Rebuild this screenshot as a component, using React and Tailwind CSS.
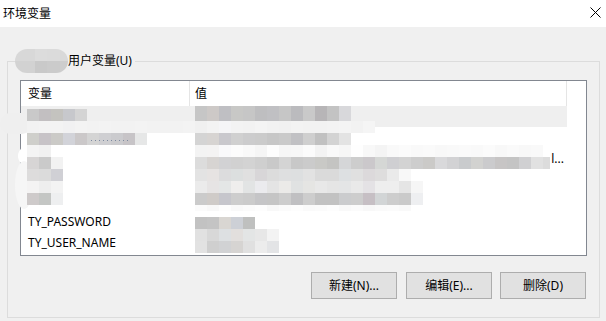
import React from 'react';

// pixelated redaction blocks, page coordinates, 12px cells
const BLOCKS = [
  { x: 27, y: 109, c: ['#c9c9c9', '#c2bfc1', '#c4c3bf', '#c7c8cc', '#d4d4d4'] },
  { x: 27, y: 121, c: ['#f2f2f2', '#f3f3f3', '#f3f3f3', '#f1f1f2', '#f3f3f3', '#f2f2f2', '#f3f3f3', '#f2f2f2', '#f2f2f2', '#f3f3f3', '#f2f2f2', '#f2f2f2', '#f2f2f2', '#f3f3f3'] },
  { x: 27, y: 133, c: ['#cfcfcb', '#c7c3c7', '#cbcac7', '#d2d3d9', '#cbc8c9', '#d4d4d4', '#cfcfd2', '#cbcbce', '#c7c4c7', '#e6e7e7'] },
  { x: 27, y: 145, c: ['#f4f4f4', '#f1f1f1'] },
  { x: 27, y: 157, c: ['#d7d5d5', '#cacaca', '#f2f2f2'] },
  { x: 27, y: 169, c: ['#dddcdc', '#dbdbdb', '#d0d0d5'] },
  { x: 27, y: 181, c: ['#f4f3f3', '#eeeeee', '#f3f3f3'] },
  { x: 27, y: 193, c: ['#cecaca', '#c4c6c4', '#eeeff0'] },

  { x: 195, y: 106, h: 15, c: ['#c6c6c6', '#cdc9c7', '#bfbfc3', '#c8c8c6', '#c6c6c6', '#bebec0', '#c0c0c3', '#c6c6c6', '#bbbbbe', '#c9c9c9', '#b7b5b7', '#c3c3c3', '#d8d8db'] },
  { x: 195, y: 121, c: ['#f0f0f0', '#f3f3f3', '#f5f5f7', '#f3f3f3', '#f2f2f2', '#f4f4f4', '#f2f2f2', '#f1f1f1', '#f3f3f3', '#f2f2f2', '#f2f2f2', '#f3f3f3', '#f4f4f4', '#f2f2f2', '#f5f5f5'] },
  { x: 195, y: 133, c: ['#d4d4d4', '#d7d4d2', '#c9c8cd', '#d0d0d0', '#cccccd', '#cbcbcb', '#c7c7c7', '#cacaca', '#c1c1c4', '#cfcfcf', '#c1c1c1', '#d3d3d3', '#e3e3e3'] },
  { x: 195, y: 145, c: ['#f3f3f3', '#f4f3f3', '#f9f9fb', '#fcfcfc', '#f9f9f9', '#f5f5f5', '#fdfdfd', '#f6f6f6', '#f7f7f7', '#fbfbfb', '#f3f3f3', '#f9f9f9', '#f6f6f6', '#fefefe', '#f8f8f8', '#f4f4f4', '#f9f9f9', '#fbfbfb', '#f9f9f9', '#fafafa', '#f8f8f8', '#f9f9f9', '#fafafa', '#f9f9f9', '#fbfbfb', '#f8f8f8', '#fafafa', '#f8f8f8', '#f9f9f9'] },
  { x: 195, y: 157, c: ['#dcdcdc', '#d7d4d2', '#d2d2d4', '#d1d1d1', '#d3d3d3', '#cfcfcf', '#c9c9c9', '#d4d4d4', '#c8c8c8', '#cbcbcb', '#c9c9c6', '#c4c4c2', '#d5d6d8', '#cdcdcd', '#cbc8cb', '#d5d7d5', '#cfcfd2', '#d3d3d3', '#cdcdcd', '#cbcac8', '#d9d9db', '#d2d2d4', '#c9cbcd', '#d2d2d0', '#cbcbcd', '#c7c5c5', '#c4c4c4', '#d0d0d2', '#e1e1e1'] },
  { x: 195, y: 169, c: ['#e3e3e3', '#e6e3e2', '#dcdcdd', '#dcdfdf', '#e0e0e0', '#d8d6d8', '#dcdcdc', '#dedfe0', '#dddfe0', '#e2e2e2', '#dadada', '#dadada', '#dde0e2', '#e0e0e0', '#dcd9db', '#dedddd', '#eaeaea', '#f8f8f8'] },
  { x: 195, y: 181, c: ['#ebebeb', '#e6e4e4', '#e4e6e6', '#efeeed', '#e2e4e4', '#ebebee', '#e4e4e4', '#ebeae8', '#e0e2e2', '#e5e5e3', '#e8e8e8', '#e5e5e5', '#e4e5e6', '#e9e9e9', '#e4e2e5', '#eeeeee', '#eeeeee', '#e5e5e5', '#f6f6f6'] },
  { x: 195, y: 193, c: ['#cbcbcb', '#cfcbc8', '#c6c6cc', '#cdcdcd', '#cbcbcb', '#c5c5c7', '#c5c5c5', '#cdcdcd', '#c0c0c2', '#cdcdcd', '#c2c2c2', '#c2c2c2', '#cbccce', '#cdcdcd', '#c6bfc4', '#d2d5d6', '#cdcdcd', '#cacaca', '#eeeff1'] },
  { x: 195, y: 205, h: 6, c: ['#fbfbfb', '#f8f8f8', '#fdfdfd', '#f9f9f9', '#fbfbfb', '#fdfdfd', '#f8f8f8', '#fbfbfb', '#fdfdfd', '#fafafa', '#fbfbfb', '#fdfdfd', '#f9f9f9', '#fbfbfb', '#f8f8f8', '#fafafa', '#fbfbfb', '#f9f9f9'] },
  { x: 195, y: 217, c: ['#c2c2c2', '#c4c4c4', '#d9d6d2', '#cdd0d6', '#bfc0bf'] },
  { x: 195, y: 229, c: ['#e1e1e1', '#d8d8d8', '#dde0e2', '#e2dfdd', '#e3e5e5', '#e7e7e7', '#f3f3f3'] },
  { x: 195, y: 241, c: ['#e2e2e2', '#cfcfcf', '#d1d2d4', '#d6d4d2', '#e0e0e0', '#ececec', '#e3e4e6'] },
];

function Redaction() {
  return (
    <svg className="absolute left-0 top-0 pointer-events-none" width="606" height="321">
      <rect x="0" y="113" width="32" height="21" rx="10" fill="#efefef" />
      <ellipse cx="30" cy="156" rx="12" ry="11" fill="#ffffff" />
      <ellipse cx="24" cy="185" rx="9" ry="24" fill="#f6f6f6" />
      {BLOCKS.map((row, i) =>
        row.c.map((col, j) => (
          <rect key={i + '-' + j} x={row.x + j * 12} y={row.y} width="12" height={row.h || 12} fill={col} />
        ))
      )}
      <rect x="543" y="157" width="7" height="12" fill="#dcdcdc" />
      {[91, 95, 99, 103, 107, 111, 115, 119, 123, 127].map(x => (
        <rect key={x} x={x} y="140" width="1" height="1" fill="#7d8aa0" />
      ))}
    </svg>
  );
}

function LegendBlob() {
  return (
    <svg width="53" height="24" className="block">
      <defs>
        <clipPath id="pill">
          <rect x="0" y="0" width="53" height="24" rx="12" />
        </clipPath>
      </defs>
      <g clipPath="url(#pill)">
        <rect x="0" y="0" width="20" height="12" fill="#d8d8d8" />
        <rect x="20" y="0" width="12" height="12" fill="#dcdcdc" />
        <rect x="32" y="0" width="13" height="12" fill="#dbdbdb" />
        <rect x="45" y="0" width="8" height="12" fill="#d9d9d9" />
        <rect x="0" y="12" width="20" height="12" fill="#d2d2d2" />
        <rect x="20" y="12" width="12" height="12" fill="#c9c9c9" />
        <rect x="32" y="12" width="13" height="12" fill="#cbcbcb" />
        <rect x="45" y="12" width="8" height="12" fill="#cdcdcd" />
      </g>
    </svg>
  );
}

const rows = [
  { name: '', selected: true },
  { name: '' },
  { name: '', tail: 'l...' },
  { name: '' },
  { name: '' },
  { name: 'TY_PASSWORD' },
  { name: 'TY_USER_NAME' },
];

export default function App() {
  return (
    <div className="relative w-[606px] h-[321px] overflow-hidden bg-[#f0f0f0] text-black text-[12px] font-['Noto_Sans','Noto_Sans_CJK_SC',sans-serif]">
      <div className="h-[27px] bg-white flex items-center justify-between pl-[3px] pr-[5px]">
        <span className="leading-none">环境变量</span>
        <svg width="11" height="11" viewBox="0 0 11 11" className="mb-[2px]">
          <path d="M0.5 0.5 L10.5 10.5 M10.5 0.5 L0.5 10.5" stroke="#000" strokeWidth="1" />
        </svg>
      </div>

      <fieldset className="ml-[7px] mt-[22px] w-[593px] border border-[#dcdcdc] px-[7px] pb-[18px]">
        <legend className="flex items-center pr-[3px]">
          <LegendBlob />
          <span className="leading-none">用户变量(U)</span>
        </legend>

        <div className="ml-[5px] mt-[7px] w-[567px] h-[176px] border border-[#828790] bg-white">
          <div className="flex h-[25px] items-center">
            <div className="w-[169px] h-full flex items-center pl-[7px] border-r border-[#e5e5e5]">变量</div>
            <div className="w-[377px] h-full flex items-center pl-[5px] border-r border-[#e5e5e5]">值</div>
          </div>
          {rows.map((r, i) => (
            <div key={i} className={'flex h-[21px] items-center w-[546px] ' + (r.selected ? 'bg-[#efefef]' : '')}>
              <div className="w-[169px] pl-[7px] whitespace-nowrap">{r.name}</div>
              <div className="w-[377px] flex justify-end pr-[3px]">{r.tail}</div>
            </div>
          ))}
        </div>

        <div className="flex justify-end mt-[16px] pr-[6px]">
          <button className="w-[86px] h-[27px] border border-[#adadad] bg-[#e1e1e1]">新建(N)...</button>
          <button className="ml-[9px] w-[86px] h-[27px] border border-[#adadad] bg-[#e1e1e1]">编辑(E)...</button>
          <button className="ml-[8px] w-[86px] h-[27px] border border-[#adadad] bg-[#e1e1e1]">删除(D)</button>
        </div>
      </fieldset>

      <Redaction />
    </div>
  );
}
